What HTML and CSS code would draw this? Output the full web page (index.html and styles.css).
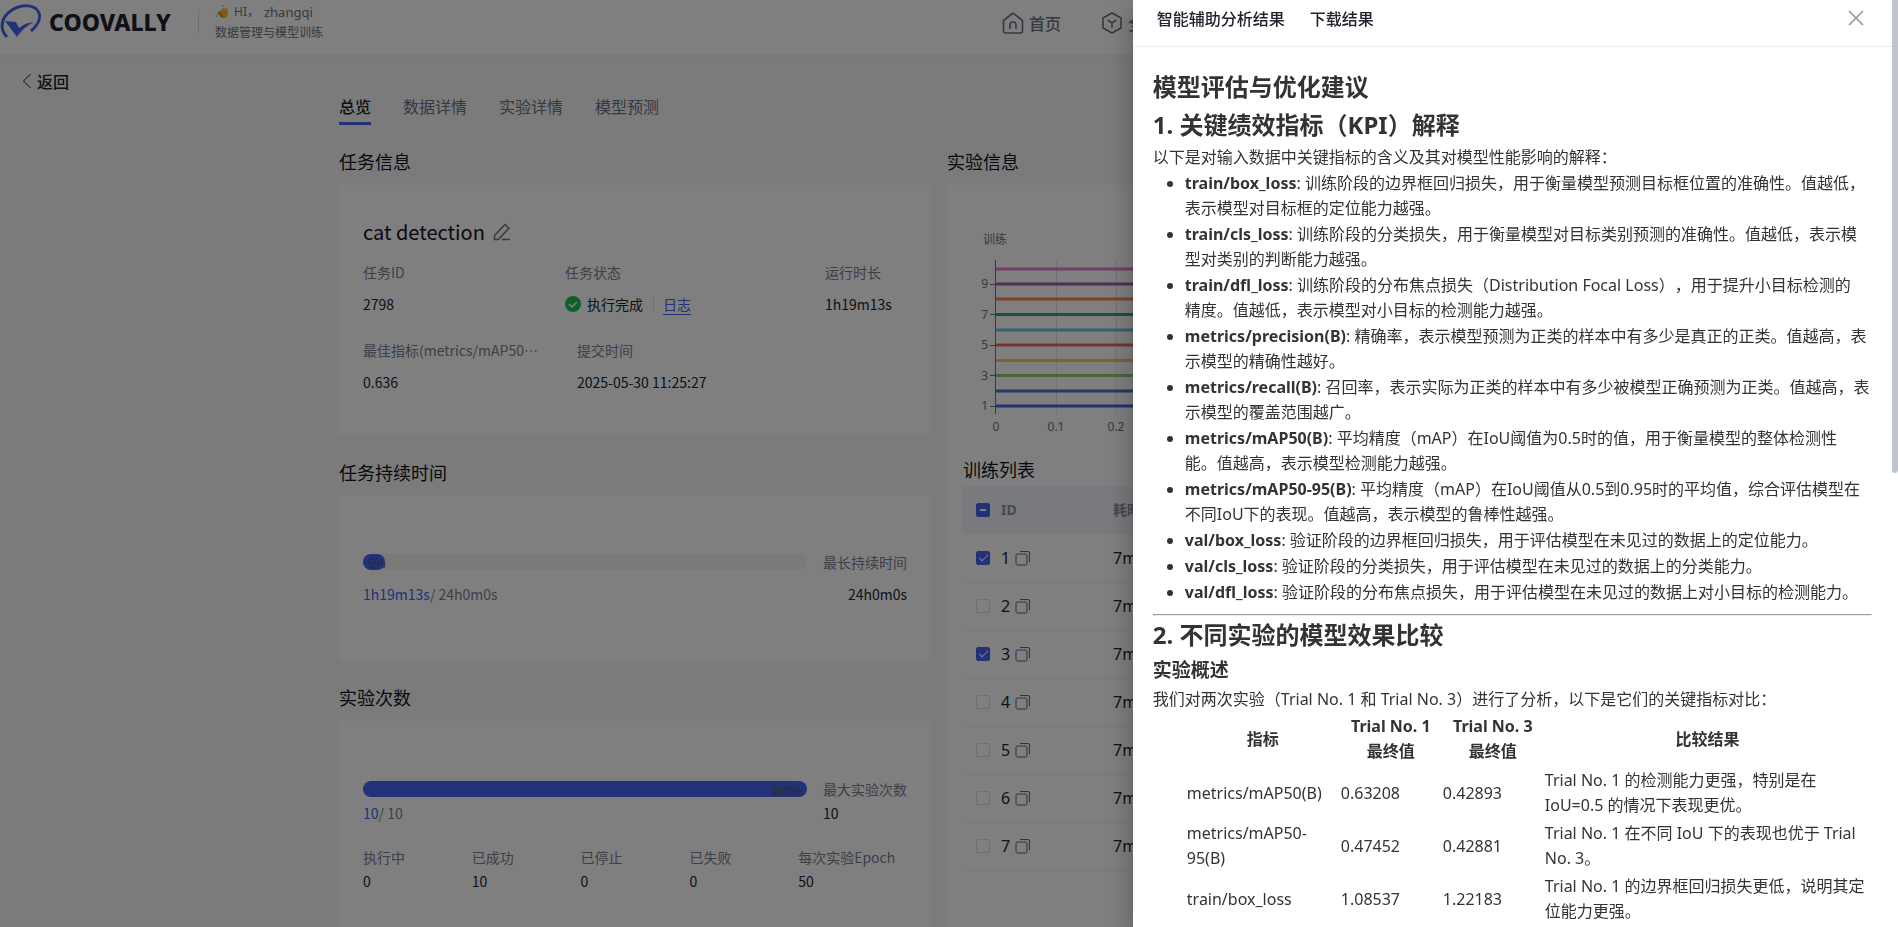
FILE: index.html
```html
<!DOCTYPE html>
<html lang="zh-CN">
<head>
    <meta charset="UTF-8">
    <meta name="viewport" content="width=device-width, initial-scale=1.0">
    <title>COOVALLY</title>
    <link rel="stylesheet" href="styles.css">
</head>
<body>

    <svg class="sprite" aria-hidden="true">
        <symbol id="icon_copy" viewBox="0 0 16 16">
            <rect x="1" y="4" width="11" height="11" rx="1.5" fill="none" stroke="currentColor"/>
            <path d="M5 1.5h8a1.5 1.5 0 0 1 1.5 1.5v9" fill="none" stroke="currentColor"/>
        </symbol>
    </svg>

    <div class="wrap">
        <header class="header">
            <a class="logo" href="#">
                <svg class="logo_mark" viewBox="0 0 42 36" aria-hidden="true">
                    <path d="M7 33C-1 25 1 13 12 6C23 -1 36 1 39 9C41 15 37 22 31 27" fill="none" stroke="#4662f0" stroke-width="3"/>
                    <path d="M5 17l11 1 3 6c4-3 7-5 15-6c-8 4-13 9-17 15z" fill="#4662f0"/>
                </svg>
                <span class="logo_text">COOVALLY</span>
            </a>
            <div class="user">
                <p class="hello">
                    <svg viewBox="0 0 14 14" width="14" height="14" aria-hidden="true">
                        <path d="M5 6l4-4 1 2 2-1 1 5-1 4-3 1.500-3-1-3.500-4z" fill="#ffb92e"/>
                        <path d="M2 8l3-2 4 5-2 2z" fill="#e8912a"/>
                        <path d="M7 1l2-1M1 10l1 2" stroke="#4aa8e8" fill="none"/>
                    </svg>
                    <span>HI，</span><span class="name">zhangqi</span>
                </p>
                <p>数据管理与模型训练</p>
            </div>
            <nav class="nav">
                <a href="#">
                    <svg viewBox="0 0 22 24" width="22" height="24" fill="none" stroke="currentColor" stroke-width="1.600" aria-hidden="true">
                        <path d="M1.500 9.500L11 2l9.500 7.500V20a2 2 0 0 1-2 2h-15a2 2 0 0 1-2-2z"/>
                        <path d="M8 18v-4a3 3 0 0 1 6 0v4"/>
                    </svg>
                    首页
                </a>
                <a href="#">
                    <svg viewBox="0 0 22 24" width="22" height="24" fill="none" stroke="currentColor" stroke-width="1.600" aria-hidden="true">
                        <path d="M11 2l9 5v10l-9 5-9-5V7z"/>
                        <path d="M6.500 9l4.500 3 4.500-3M11 12v5"/>
                    </svg>
                    全部
                </a>
            </nav>
        </header>

        <button class="back" type="button">
            <svg viewBox="0 0 10 16" width="10" height="16" fill="none" stroke="currentColor" aria-hidden="true"><path d="M8.500 1L1.500 8l7 7"/></svg>
            返回
        </button>

        <main class="inner">
            <div class="tabs">
                <button class="tab on" type="button">总览</button>
                <button class="tab" type="button">数据详情</button>
                <button class="tab" type="button">实验详情</button>
                <button class="tab" type="button">模型预测</button>
            </div>

            <div class="cols">
                <div class="col">
                    <section>
                        <h2 class="tit">任务信息</h2>
                        <div class="card info">
                            <h3 class="task_name">cat detection
                                <svg viewBox="0 0 18 18" width="18" height="18" fill="none" stroke="currentColor" stroke-width="1.500" aria-hidden="true"><path d="M1.500 16.500v-4L12 1.500l4 3.500L5.500 16.500zM9 16.500h8"/></svg>
                            </h3>
                            <dl class="row row01">
                                <div><dt>任务ID</dt><dd>2798</dd></div>
                                <div>
                                    <dt>任务状态</dt>
                                    <dd class="status">
                                        <svg viewBox="0 0 16 16" width="16" height="16" aria-hidden="true"><circle cx="8" cy="8" r="8" fill="#1fbf52"/><path d="M4 8l3 3 5-5" fill="none" stroke="#fff" stroke-width="1.500"/></svg>
                                        执行完成
                                        <a href="#">日志</a>
                                    </dd>
                                </div>
                                <div><dt>运行时长</dt><dd>1h19m13s</dd></div>
                            </dl>
                            <dl class="row row02">
                                <div><dt>最佳指标(metrics/mAP50⋯</dt><dd>0.636</dd></div>
                                <div><dt>提交时间</dt><dd>2025-05-30 11:25:27</dd></div>
                            </dl>
                        </div>
                    </section>

                    <section>
                        <h2 class="tit">任务持续时间</h2>
                        <div class="card time">
                            <div class="bar_box">
                                <div class="bar"><div class="fill" style="width:5%">5%</div></div>
                                <span class="label">最长持续时间</span>
                            </div>
                            <div class="bar_txt time_txt">
                                <span><b>1h19m13s</b>/ 24h0m0s</span>
                                <strong>24h0m0s</strong>
                            </div>
                        </div>
                    </section>

                    <section>
                        <h2 class="tit">实验次数</h2>
                        <div class="card count">
                            <div class="bar_box">
                                <div class="bar"><div class="fill" style="width:100%">100%</div></div>
                                <span class="label">最大实验次数</span>
                            </div>
                            <div class="bar_txt">
                                <span><b>10</b>/ 10</span>
                                <strong class="max">10</strong>
                            </div>
                            <dl class="stats">
                                <div><dt>执行中</dt><dd>0</dd></div>
                                <div><dt>已成功</dt><dd>10</dd></div>
                                <div><dt>已停止</dt><dd>0</dd></div>
                                <div><dt>已失败</dt><dd>0</dd></div>
                                <div><dt>每次实验Epoch</dt><dd>50</dd></div>
                            </dl>
                        </div>
                    </section>
                </div>

                <section class="col">
                    <h2 class="tit">实验信息</h2>
                    <div class="card exp">
                        <svg class="chart" width="560" height="208" role="img" aria-label="训练">
                            <text x="20" y="22">训练</text>
                            <g stroke="#e0e3f0">
                                <path d="M93.500 39v153M153.500 39v153M213.500 39v153M273.500 39v153"/>
                            </g>
                            <g stroke-width="3">
                                <path d="M33 47h520" stroke="#ea7ccc"/>
                                <path d="M33 62h520" stroke="#9a60b4"/>
                                <path d="M33 77h520" stroke="#fc8452"/>
                                <path d="M33 92.500h520" stroke="#3ba272"/>
                                <path d="M33 108h520" stroke="#73c0de"/>
                                <path d="M33 123h520" stroke="#ee6666"/>
                                <path d="M33 138.500h520" stroke="#fac858"/>
                                <path d="M33 153.500h520" stroke="#91cc75"/>
                                <path d="M33 169h520" stroke="#5470c6"/>
                                <path d="M33 184h520" stroke="#4662f0"/>
                            </g>
                            <path d="M32.500 38v154M27 62.500h5M27 92.500h5M27 123.500h5M27 153.500h5M27 184.500h5" stroke="#6e7079"/>
                            <g text-anchor="end">
                                <text x="25" y="66">9</text>
                                <text x="25" y="97">7</text>
                                <text x="25" y="127">5</text>
                                <text x="25" y="158">3</text>
                                <text x="25" y="188">1</text>
                            </g>
                            <g text-anchor="middle">
                                <text x="33" y="209">0</text>
                                <text x="93" y="209">0.1</text>
                                <text x="153" y="209">0.2</text>
                            </g>
                        </svg>
                        <h2 class="tit">训练列表</h2>
                        <div class="table_box">
                            <table class="list">
                                <thead>
                                    <tr><th class="chk"><input class="some" type="checkbox" aria-label="全选"></th><th class="id">ID</th><th>耗时</th></tr>
                                </thead>
                                <tbody>
                                    <tr><td><input type="checkbox" aria-label="1" checked></td><td>1 <svg><use href="#icon_copy"/></svg></td><td>7m</td></tr>
                                    <tr><td><input type="checkbox" aria-label="2"></td><td>2 <svg><use href="#icon_copy"/></svg></td><td>7m</td></tr>
                                    <tr><td><input type="checkbox" aria-label="3" checked></td><td>3 <svg><use href="#icon_copy"/></svg></td><td>7m</td></tr>
                                    <tr><td><input type="checkbox" aria-label="4"></td><td>4 <svg><use href="#icon_copy"/></svg></td><td>7m</td></tr>
                                    <tr><td><input type="checkbox" aria-label="5"></td><td>5 <svg><use href="#icon_copy"/></svg></td><td>7m</td></tr>
                                    <tr><td><input type="checkbox" aria-label="6"></td><td>6 <svg><use href="#icon_copy"/></svg></td><td>7m</td></tr>
                                    <tr><td><input type="checkbox" aria-label="7"></td><td>7 <svg><use href="#icon_copy"/></svg></td><td>7m</td></tr>
                                    <tr><td><input type="checkbox" aria-label="8"></td><td>8 <svg><use href="#icon_copy"/></svg></td><td>7m</td></tr>
                                </tbody>
                            </table>
                        </div>
                    </div>
                </section>
            </div>
        </main>
    </div>

    <div class="dim">
        <aside class="drawer">
            <div class="drawer_head">
                <button type="button">智能辅助分析结果</button>
                <button type="button">下载结果</button>
                <button class="close" type="button" aria-label="关闭">
                    <svg viewBox="0 0 16 16" width="16" height="16" fill="none" stroke="currentColor" stroke-width="1.500" aria-hidden="true"><path d="M1 1l14 14M15 1L1 15"/></svg>
                </button>
            </div>
            <div class="report">
                <h1>模型评估与优化建议</h1>
                <h2>1. 关键绩效指标（KPI）解释</h2>
                <p>以下是对输入数据中关键指标的含义及其对模型性能影响的解释：</p>
                <ul>
                    <li><strong>train/box_loss</strong>: 训练阶段的边界框回归损失，用于衡量模型预测目标框位置的准确性。值越低，表示模型对目标框的定位能力越强。</li>
                    <li><strong>train/cls_loss</strong>: 训练阶段的分类损失，用于衡量模型对目标类别预测的准确性。值越低，表示模型对类别的判断能力越强。</li>
                    <li><strong>train/dfl_loss</strong>: 训练阶段的分布焦点损失（Distribution Focal Loss），用于提升小目标检测的<br>精度。值越低，表示模型对小目标的检测能力越强。</li>
                    <li><strong>metrics/precision(B)</strong>: 精确率，表示模型预测为正类的样本中有多少是真正的正类。值越高，表示模型的精确性越好。</li>
                    <li><strong>metrics/recall(B)</strong>: 召回率，表示实际为正类的样本中有多少被模型正确预测为正类。值越高，表示模型的覆盖范围越广。</li>
                    <li><strong>metrics/mAP50(B)</strong>: 平均精度（mAP）在IoU阈值为0.5时的值，用于衡量模型的整体检测性<br>能。值越高，表示模型检测能力越强。</li>
                    <li><strong>metrics/mAP50-95(B)</strong>: 平均精度（mAP）在IoU阈值从0.5到0.95时的平均值，综合评估模型在不同IoU下的表现。值越高，表示模型的鲁棒性越强。</li>
                    <li><strong>val/box_loss</strong>: 验证阶段的边界框回归损失，用于评估模型在未见过的数据上的定位能力。</li>
                    <li><strong>val/cls_loss</strong>: 验证阶段的分类损失，用于评估模型在未见过的数据上的分类能力。</li>
                    <li><strong>val/dfl_loss</strong>: 验证阶段的分布焦点损失，用于评估模型在未见过的数据上对小目标的检测能力。</li>
                </ul>
                <hr>
                <h2>2. 不同实验的模型效果比较</h2>
                <h3>实验概述</h3>
                <p>我们对两次实验（Trial No. 1 和 Trial No. 3）进行了分析，以下是它们的关键指标对比：</p>
                <div class="compare">
                    <table>
                        <thead>
                            <tr><th class="metric">指标</th><th class="trial">Trial No. 1<br>最终值</th><th class="trial">Trial No. 3<br>最终值</th><th>比较结果</th></tr>
                        </thead>
                        <tbody>
                            <tr><td>metrics/mAP50(B)</td><td>0.63208</td><td>0.42893</td><td>Trial No. 1 的检测能力更强，特别是在 IoU=0.5 的情况下表现更优。</td></tr>
                            <tr><td>metrics/mAP50-95(B)</td><td>0.47452</td><td>0.42881</td><td>Trial No. 1 在不同 IoU 下的表现也优于 Trial No. 3。</td></tr>
                            <tr><td>train/box_loss</td><td>1.08537</td><td>1.22183</td><td>Trial No. 1 的边界框回归损失更低，说明其定位能力更强。</td></tr>
                        </tbody>
                    </table>
                </div>
            </div>
        </aside>
        <div class="scroll"><div class="thumb"></div></div>
    </div>

</body>
</html>
```
FILE: styles.css
```css
*{margin:0;padding:0;box-sizing:border-box;}
body{height:100vh;overflow:hidden;background-color:#f6f6f7;color:#20242f;font-family:"Noto Sans CJK SC",sans-serif;font-size:14px;line-height:24px;}
button{border:0;background:none;font:inherit;color:inherit;cursor:pointer;}
a{color:inherit;text-decoration:none;}
.sprite{display:none;}

.wrap{width:100%;height:100vh;overflow:hidden;}

/* header */
.header{display:flex;height:54px;background-color:#fff;box-shadow:0 2px 8px rgba(0,0,0,.03);}
.logo{display:flex;align-items:center;flex:none;width:174px;height:44px;gap:7px;}
.logo_mark{flex:none;width:42px;height:36px;}
.logo_text{font-family:"Noto Sans",sans-serif;font-weight:800;font-size:23px;color:#20222c;}
.user{margin:10px 0 0 24px;padding-left:16px;height:24px;border-left:1px solid #dcdfe6;color:#6c7280;font-size:12px;}
.user p{line-height:20px;}
.hello{display:flex;align-items:center;gap:5px;margin-top:-8px;font-family:"Noto Sans","Noto Sans CJK SC",sans-serif;}
.hello .name{font-size:13px;}
.nav{display:flex;gap:40px;margin-left:auto;width:896px;height:45px;color:#6c7280;font-size:16px;font-weight:500;}
.nav a{display:flex;align-items:center;gap:5px;white-space:nowrap;}

.back{display:flex;align-items:center;gap:5px;margin:15px 0 0 22px;height:24px;font-size:16px;font-weight:500;}

/* content */
.inner{max-width:1220px;margin:0 auto;padding-top:1px;}
.tabs{display:flex;gap:32px;margin-bottom:24px;}
.tab{height:31px;padding-bottom:4px;border-bottom:3px solid transparent;font-size:16px;color:#6c7280;}
.tab.on{border-color:#4662f0;color:#20222c;font-weight:500;}
.cols{display:grid;grid-template-columns:minmax(0,592px) minmax(0,1fr);gap:16px;}
.tit{height:24px;margin-bottom:12px;font-size:18px;font-weight:400;color:#10121c;}
.card{margin-bottom:25px;padding:0 24px;background-color:#fff;border-radius:4px;}
dt,.label{color:#7a808c;}

.info{padding-top:35px;height:250px;}
.task_name{display:flex;align-items:center;gap:8px;font-size:20px;font-weight:400;color:#10121c;}
.task_name svg{color:#6c7280;}
.row{display:grid;margin-top:16px;}
.row dd{margin-top:8px;}
.row01{grid-template-columns:202px 260px 1fr;}
.row02{grid-template-columns:214px 1fr;margin-top:22px;}
.status{display:flex;align-items:center;gap:6px;}
.status a{margin-left:4px;padding-left:9px;color:#4662f0;text-decoration:underline;text-underline-offset:4px;border-left:1px solid #dcdfee;line-height:16px;}

.time{height:164px;padding-top:54px;}
.count{height:240px;padding-top:56px;}
.bar_box{display:flex;align-items:center;gap:16px;}
.bar{flex:1;height:16px;border-radius:8px;background-color:#f5f5f5;}
.fill{height:16px;padding-right:5px;border-radius:8px;background-color:#4662f0;font-size:12px;line-height:18px;text-align:right;color:#55585f;}
.time .fill{padding:0 0 0 5px;}
.bar_txt{display:flex;justify-content:space-between;color:#7a808c;}
.bar_txt b{color:#4662f0;font-weight:400;}
.bar_txt strong{color:#20242f;font-weight:400;}
.bar_txt .max{width:84px;}
.time_txt{margin-top:8px;}
.stats{display:grid;grid-template-columns:repeat(5,1fr);margin-top:20px;white-space:nowrap;}

.exp{padding:37px 16px 0;height:760px;}
.chart{display:block;max-width:100%;margin-bottom:27px;overflow:visible;font-size:12px;font-family:"Noto Sans","Noto Sans CJK SC",sans-serif;fill:#6e7079;}
.exp .tit{margin-bottom:5px;}
.table_box{height:400px;overflow:hidden;}
.list{width:100%;border-collapse:collapse;table-layout:fixed;text-align:left;font-family:"Noto Sans","Noto Sans CJK SC",sans-serif;}
.list th{height:48px;background-color:#f2f5fa;color:#909399;}
.list .chk{width:38px;}
.list .id{width:112px;}
.list td{height:48px;border-bottom:1px solid #ebeef5;font-size:16px;}
.list td svg{width:16px;height:16px;margin-left:1px;vertical-align:-2px;color:#566078;}
.list input{appearance:none;display:block;width:14px;height:14px;margin-left:13px;border:1px solid #dcdfe6;border-radius:2px;background-color:#fff;}
.list input:checked,.list .some{border-color:#4662f0;background-color:#4662f0;}
.list input:checked::after{content:"";display:block;width:4px;height:8px;margin:0 auto;border:solid #fff;border-width:0 1px 1px 0;transform:rotate(45deg);}
.list .some::after{content:"";display:block;width:6px;height:2px;margin:5px auto 0;background-color:#fff;}

/* drawer */
.dim{position:fixed;inset:0;display:flex;justify-content:flex-end;background-color:rgba(0,0,0,.5);}
.drawer{width:40%;flex:none;background-color:#fff;overflow:hidden;box-shadow:0 8px 10px -5px rgba(0,0,0,.2),0 16px 24px 2px rgba(0,0,0,.14),0 6px 30px 5px rgba(0,0,0,.12);}
.scroll{width:6px;background-color:#fff;z-index:1;}
.thumb{height:51%;border-radius:0 0 3px 3px;background-color:#bfc3cb;}
.drawer_head{display:flex;align-items:center;gap:25px;height:47px;padding:0 28px 10px 24px;border-bottom:1px solid #e6edf3;font-size:16px;font-weight:500;}
.close{display:flex;margin-left:auto;color:#909399;}

.report{padding:21px 20px 0;color:#333;font-family:"Noto Sans","Noto Sans CJK SC",sans-serif;font-size:16px;line-height:26px;text-spacing-trim:space-all;}
.report h1,.report h2{font-size:24px;line-height:38px;}
.report h3{font-size:19px;line-height:32px;}
.report ul{margin-top:1px;padding-left:32px;line-height:25px;}
.report li{margin-bottom:1px;}
.report hr{margin-top:9px;}
.compare{padding-left:32px;line-height:25px;}
.compare table{width:100%;table-layout:fixed;border-spacing:2px;}
.compare th,.compare td{padding-bottom:1px;}
.compare th{padding-bottom:2px;}
.compare .metric{width:152px;}
.compare .trial{width:100px;}
```
